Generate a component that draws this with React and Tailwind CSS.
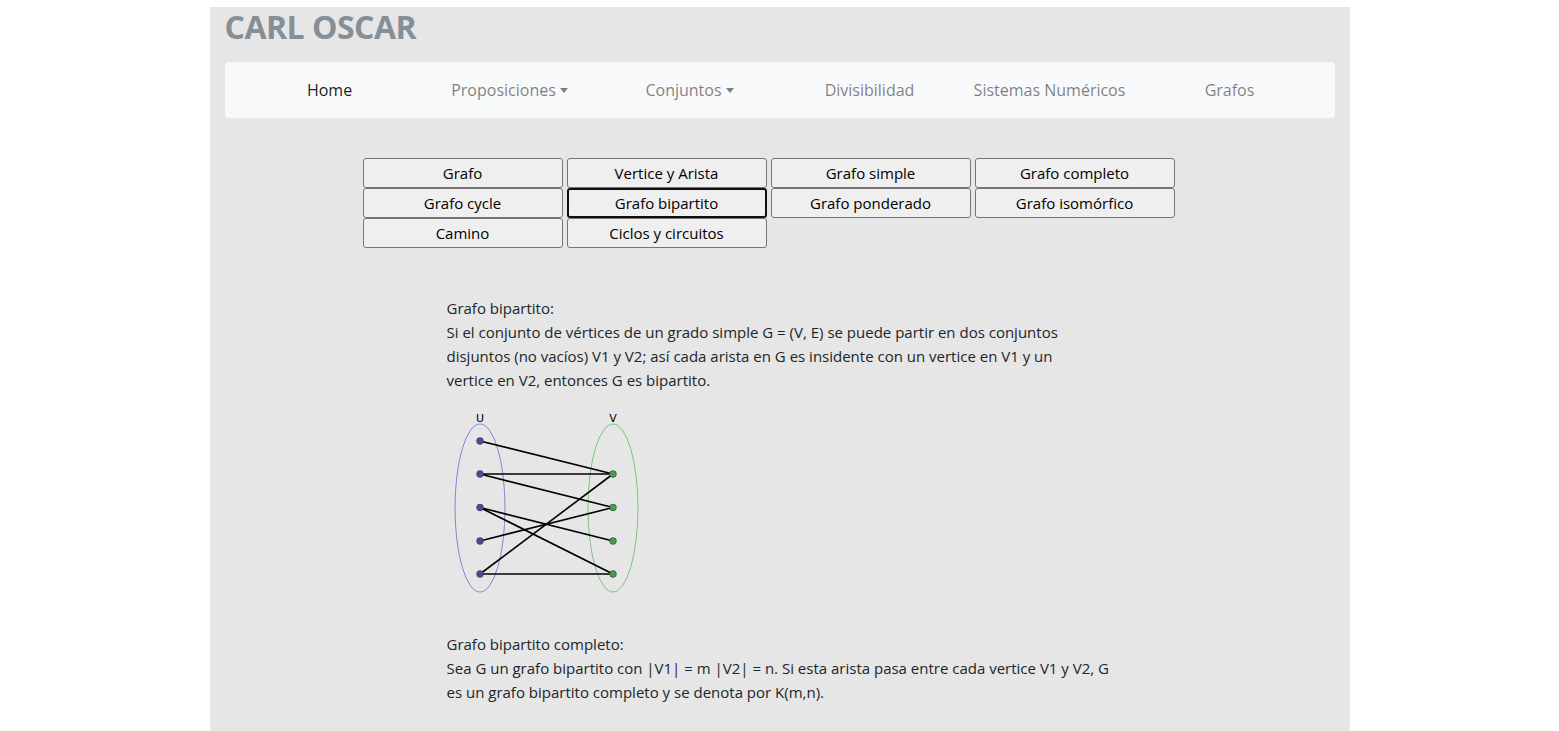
import React from "react";

const font = { fontFamily: '"Segoe UI", "Open Sans", "Noto Sans", sans-serif' };

function Caret() {
  return <span className="inline-block ml-[4px] align-[3px] border-t-[5px] border-t-current border-x-[4.5px] border-x-transparent" />;
}

function Graph() {
  const U = [33, 66, 99.5, 133, 166];
  const V = [66, 99.5, 133, 166];
  const ux = 33, vx = 166;
  const edges = [[0,0],[1,0],[1,1],[2,2],[2,3],[3,1],[4,0],[4,3]];
  return (
    <svg width="200" height="192" viewBox="0 0 200 192">
      <ellipse cx={ux} cy={100} rx={25} ry={84} fill="none" stroke="#7b7bcf" strokeWidth="0.9" />
      <ellipse cx={vx} cy={100} rx={25} ry={84} fill="none" stroke="#6fbf6f" strokeWidth="0.9" />
      <text x={ux} y={14} textAnchor="middle" fontSize="11" fill="#000" fontFamily="DejaVu Sans, sans-serif">U</text>
      <text x={vx} y={14} textAnchor="middle" fontSize="11" fill="#000" fontFamily="DejaVu Sans, sans-serif">V</text>
      {edges.map(([a, b], i) => (
        <line key={i} x1={ux} y1={U[a]} x2={vx} y2={V[b]} stroke="#000" strokeWidth="1.6" />
      ))}
      {U.map((y, i) => <circle key={"u" + i} cx={ux} cy={y} r="3.4" fill="#4b4b9a" stroke="#333" strokeWidth="0.5" />)}
      {V.map((y, i) => <circle key={"v" + i} cx={vx} cy={y} r="3.4" fill="#4a9a4a" stroke="#333" strokeWidth="0.5" />)}
    </svg>
  );
}

const buttons = [
  "Grafo", "Vertice y Arista", "Grafo simple", "Grafo completo",
  "Grafo cycle", "Grafo bipartito", "Grafo ponderado", "Grafo isomórfico",
  "Camino", "Ciclos y circuitos",
];

export default function App() {
  return (
    <div className="bg-white min-h-screen pt-[7px]" style={font}>
      <div className="w-[1140px] mx-auto bg-[#e6e6e6] px-[15px] min-h-[724px] pb-[20px]">
        <h1 className="text-[32px] font-bold text-[#868e96] leading-[40px] h-[40px] tracking-[-0.5px]">CARL OSCAR</h1>
        <nav className="mt-[15px] bg-[#f8f9fa] rounded-[4px] h-[56px] px-[15px] flex items-center text-[16px]">
          <div className="w-[180px] text-center text-[rgba(0,0,0,0.9)]">Home</div>
          <div className="w-[180px] text-center text-[rgba(0,0,0,0.5)]">Proposiciones<Caret /></div>
          <div className="w-[180px] text-center text-[rgba(0,0,0,0.5)]">Conjuntos<Caret /></div>
          <div className="w-[180px] text-center text-[rgba(0,0,0,0.5)]">Divisibilidad</div>
          <div className="w-[180px] text-center text-[rgba(0,0,0,0.5)]">Sistemas Numéricos</div>
          <div className="w-[180px] text-center text-[rgba(0,0,0,0.5)]">Grafos</div>
        </nav>
        <div className="mt-[40px] ml-[138px] grid grid-cols-[repeat(4,200px)] gap-x-[4px]">
          {buttons.map((b) => (
            <button
              key={b}
              className={
                "h-[30px] bg-[#efefef] text-[15px] text-black rounded-[3px] " +
                (b === "Grafo bipartito" ? "border-2 border-[#101010] bg-[#e9e9e9]" : "border border-[#767676]")
              }
            >
              {b}
            </button>
          ))}
        </div>
        <div className="ml-[222px] mt-[48px] w-[665px] text-[15px] leading-[24px] text-[#212529]">
          <div className="w-[645px]">
            <p>Grafo bipartito:</p>
            <p>Si el conjunto de vértices de un grado simple G = (V, E) se puede partir en dos conjuntos disjuntos (no vacíos) V1 y V2; así cada arista en G es insidente con un vertice en V1 y un vertice en V2, entonces G es bipartito.</p>
          </div>
          <div className="mt-[16px] h-[192px]">
            <Graph />
          </div>
          <p className="mt-[32px]">Grafo bipartito completo:</p>
          <p>Sea G un grafo bipartito con |V1| = m |V2| = n. Si esta arista pasa entre cada vertice V1 y V2, G es un grafo bipartito completo y se denota por K(m,n).</p>
        </div>
      </div>
    </div>
  );
}
